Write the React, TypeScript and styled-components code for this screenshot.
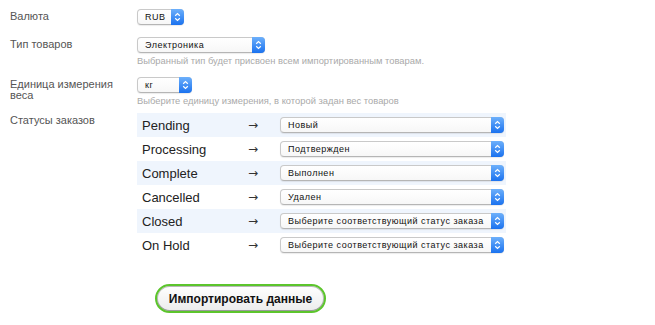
import styled, { createGlobalStyle } from 'styled-components';

const GlobalStyle = createGlobalStyle`
  body {
    margin: 0;
    background: #fff;
    font-family: "Liberation Sans", Arial, sans-serif;
  }
`;

const Form = styled.div`
  width: 655px;
  height: 325px;
  padding: 9px 0 0 10px;
  box-sizing: border-box;
  display: flex;
  flex-direction: column;
`;

const FieldRow = styled.div<{ $gap?: number }>`
  display: grid;
  grid-template-columns: 127px 1fr;
  margin-bottom: ${props => props.$gap ?? 0}px;
`;

const Label = styled.div`
  font-size: 11px;
  line-height: 11px;
  color: #555;
  padding-top: 2px;
`;

const Control = styled.div`
  display: flex;
  flex-direction: column;
  align-items: flex-start;
`;

const Hint = styled.div`
  font-size: 9.4px;
  line-height: 11px;
  color: #aaa;
  margin-top: 2px;
`;

const SelectBox = styled.div<{ $width: number }>`
  position: relative;
  width: ${props => props.$width}px;
  height: 16px;
  box-sizing: border-box;
  border: 1px solid #c9c9c9;
  border-bottom-color: #b5b5b5;
  border-radius: 4px;
  background: linear-gradient(#fff, #f7f7f7);
  box-shadow: 0 1px 1px rgba(0, 0, 0, 0.08);
  font-size: 9px;
  line-height: 14px;
  color: #111;
  padding-left: 7px;
  letter-spacing: 0.5px;
  white-space: nowrap;
  display: flex;
  align-items: center;
`;

const Stepper = styled.span`
  position: absolute;
  top: -1px;
  right: -1px;
  bottom: -1px;
  width: 13px;
  border-radius: 0 4px 4px 0;
  background: linear-gradient(#6db0fb, #1b72ef);
  display: flex;
  align-items: center;
  justify-content: center;
`;

const Select = ({ value, width }: { value: string; width: number }) => (
  <SelectBox $width={width}>
    {value}
    <Stepper>
      <svg width="7" height="10" viewBox="0 0 7 10">
        <path d="M1.2 3.8 L3.5 1.6 L5.8 3.8 M1.2 6.2 L3.5 8.4 L5.8 6.2" fill="none" stroke="#fff" strokeWidth="1.2" />
      </svg>
    </Stepper>
  </SelectBox>
);

const StatusTable = styled.div`
  display: flex;
  flex-direction: column;
  width: 369px;
`;

const StatusRow = styled.div<{ $striped: boolean }>`
  display: grid;
  grid-template-columns: 111px 32px 1fr;
  align-items: center;
  height: 24px;
  background: ${props => (props.$striped ? '#eff5fd' : 'transparent')};
`;

const StatusName = styled.span`
  font-size: 13px;
  color: #222;
  padding-left: 5px;
`;

const Arrow = styled.span`
  font-family: "DejaVu Sans", sans-serif;
  font-size: 12px;
  color: #333;
`;

const ButtonRow = styled.div`
  padding: 27px 0 0 145px;
`;

const ImportButton = styled.button`
  width: 171px;
  height: 29px;
  border: 2px solid #5cc52c;
  border-radius: 15px;
  background: linear-gradient(#ffffff, #ececec);
  box-shadow: inset 0 -1px 0 #9a9a9a, inset 0 0 0 1px #b8b8b8;
  font-family: "Liberation Sans", Arial, sans-serif;
  font-weight: bold;
  font-size: 12px;
  color: #111;
  cursor: pointer;
`;

const statuses = [
  { name: 'Pending', value: 'Новый' },
  { name: 'Processing', value: 'Подтвержден' },
  { name: 'Complete', value: 'Выполнен' },
  { name: 'Cancelled', value: 'Удален' },
  { name: 'Closed', value: 'Выберите соответствующий статус заказа' },
  { name: 'On Hold', value: 'Выберите соответствующий статус заказа' },
];

const App = () => {
  return (
    <>
      <GlobalStyle />
      <Form>
        <FieldRow $gap={12}>
          <Label>Валюта</Label>
          <Control>
            <Select value="RUB" width={47} />
          </Control>
        </FieldRow>
        <FieldRow $gap={11}>
          <Label>Тип товаров</Label>
          <Control>
            <Select value="Электроника" width={128} />
            <Hint>Выбранный тип будет присвоен всем импортированным товарам.</Hint>
          </Control>
        </FieldRow>
        <FieldRow $gap={7}>
          <Label>Единица измерения веса</Label>
          <Control>
            <Select value="кг" width={55} />
            <Hint>Выберите единицу измерения, в которой задан вес товаров</Hint>
          </Control>
        </FieldRow>
        <FieldRow>
          <Label>Статусы заказов</Label>
          <StatusTable>
            {statuses.map((s, i) => (
              <StatusRow key={s.name} $striped={i % 2 === 0}>
                <StatusName>{s.name}</StatusName>
                <Arrow>→</Arrow>
                <Select value={s.value} width={224} />
              </StatusRow>
            ))}
          </StatusTable>
        </FieldRow>
        <ButtonRow>
          <ImportButton>Импортировать данные</ImportButton>
        </ButtonRow>
      </Form>
    </>
  );
};

export default App;
